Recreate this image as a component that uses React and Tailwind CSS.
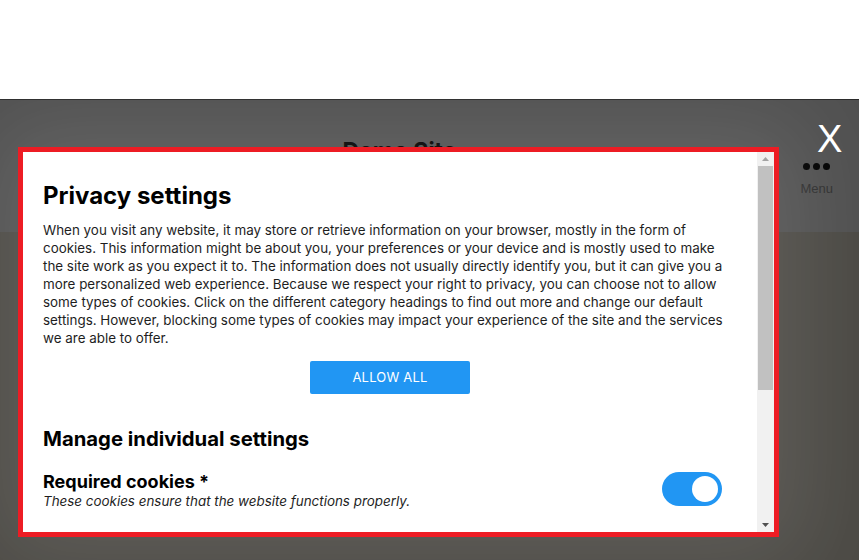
export default function App() {
    return (
        <div className="relative w-[859px] h-[560px] overflow-hidden bg-white font-['Inter',sans-serif]">
            {/* page behind the overlay */}
            <div className="h-[99px] bg-white"></div>
            <div className="h-[133px] bg-[#f2f2f2] flex items-start justify-center pr-[60px] relative">
                <h1 className="mt-[37px] text-[23px] font-bold text-black leading-[30px]">Demo Site</h1>
                <div className="absolute right-[26px] top-[64px] flex flex-col items-center">
                    <div className="flex gap-[3px]">
                        <span className="w-[7px] h-[7px] rounded-full bg-black"></span>
                        <span className="w-[7px] h-[7px] rounded-full bg-black"></span>
                        <span className="w-[7px] h-[7px] rounded-full bg-black"></span>
                    </div>
                    <span className="mt-[11px] text-[13px] leading-[15px] text-[#8e8e8e] font-['Liberation_Sans',sans-serif]">Menu</span>
                </div>
            </div>
            <div className="h-[328px] bg-[#e2dccf]"></div>

            {/* overlay */}
            <div className="absolute left-0 right-0 top-[99px] bottom-0 bg-black/[0.67] border-t border-[#2a2a2a]"></div>

            {/* close */}
            <button className="absolute left-[817px] top-[117px] text-white text-[38px] leading-[44px] font-['Liberation_Sans',sans-serif]">X</button>

            {/* modal */}
            <div className="absolute left-[18px] top-[147px] w-[761px] h-[390px] border-[5px] border-[#ed1c24] bg-white flex shadow-[0_0_90px_30px_rgba(255,255,255,0.11)]">
                <div className="flex-1 overflow-hidden pl-[20px] pr-[20px] pt-[28px]">
                    <h2 className="text-[24px] leading-[32px] font-bold text-black">Privacy settings</h2>
                    <p className="mt-[9px] text-[13.4px] leading-[18px] text-[#1e1e1e]">
                        When you visit any website, it may store or retrieve information on your browser, mostly in the form of cookies. This information might be about you, your preferences or your device and is mostly used to make the site work as you expect it to. The information does not usually directly identify you, but it can give you a more personalized web experience. Because we respect your right to privacy, you can choose not to allow some types of cookies. Click on the different category headings to find out more and change our default settings. However, blocking some types of cookies may impact your experience of the site and the services we are able to offer.
                    </p>
                    <div className="mt-[14px] flex justify-center">
                        <button className="w-[160px] h-[33px] rounded-[2px] bg-[#2196f3] text-white text-[13px] tracking-[0.2px] uppercase">Allow all</button>
                    </div>
                    <h3 className="mt-[32px] text-[20.3px] leading-[26px] font-bold text-black">Manage individual settings</h3>
                    <div className="mt-[19px] flex items-center justify-between">
                        <div>
                            <h4 className="text-[18px] leading-[21px] font-bold text-black">Required cookies *</h4>
                            <p className="text-[13.4px] leading-[18px] italic text-[#1e1e1e]">These cookies ensure that the website functions properly.</p>
                        </div>
                        <div className="mr-[15px] mb-[3px] w-[60px] h-[34px] rounded-full bg-[#2196f3] flex items-center justify-end pr-[4px]">
                            <span className="w-[26px] h-[26px] rounded-full bg-white"></span>
                        </div>
                    </div>
                </div>
                {/* scrollbar */}
                <div className="w-[17px] bg-[#f1f1f1] flex flex-col">
                    <div className="h-[14px] flex items-center justify-center">
                        <svg width="7" height="4" viewBox="0 0 7 4"><polygon points="0,4 7,4 3.5,0" fill="#a3a3a3" /></svg>
                    </div>
                    <div className="h-[224px] mx-[1px] bg-[#c1c1c1]"></div>
                    <div className="flex-1"></div>
                    <div className="h-[14px] flex items-center justify-center">
                        <svg width="7" height="4" viewBox="0 0 7 4"><polygon points="0,0 7,0 3.5,4" fill="#505050" /></svg>
                    </div>
                </div>
            </div>
        </div>
    );
}
